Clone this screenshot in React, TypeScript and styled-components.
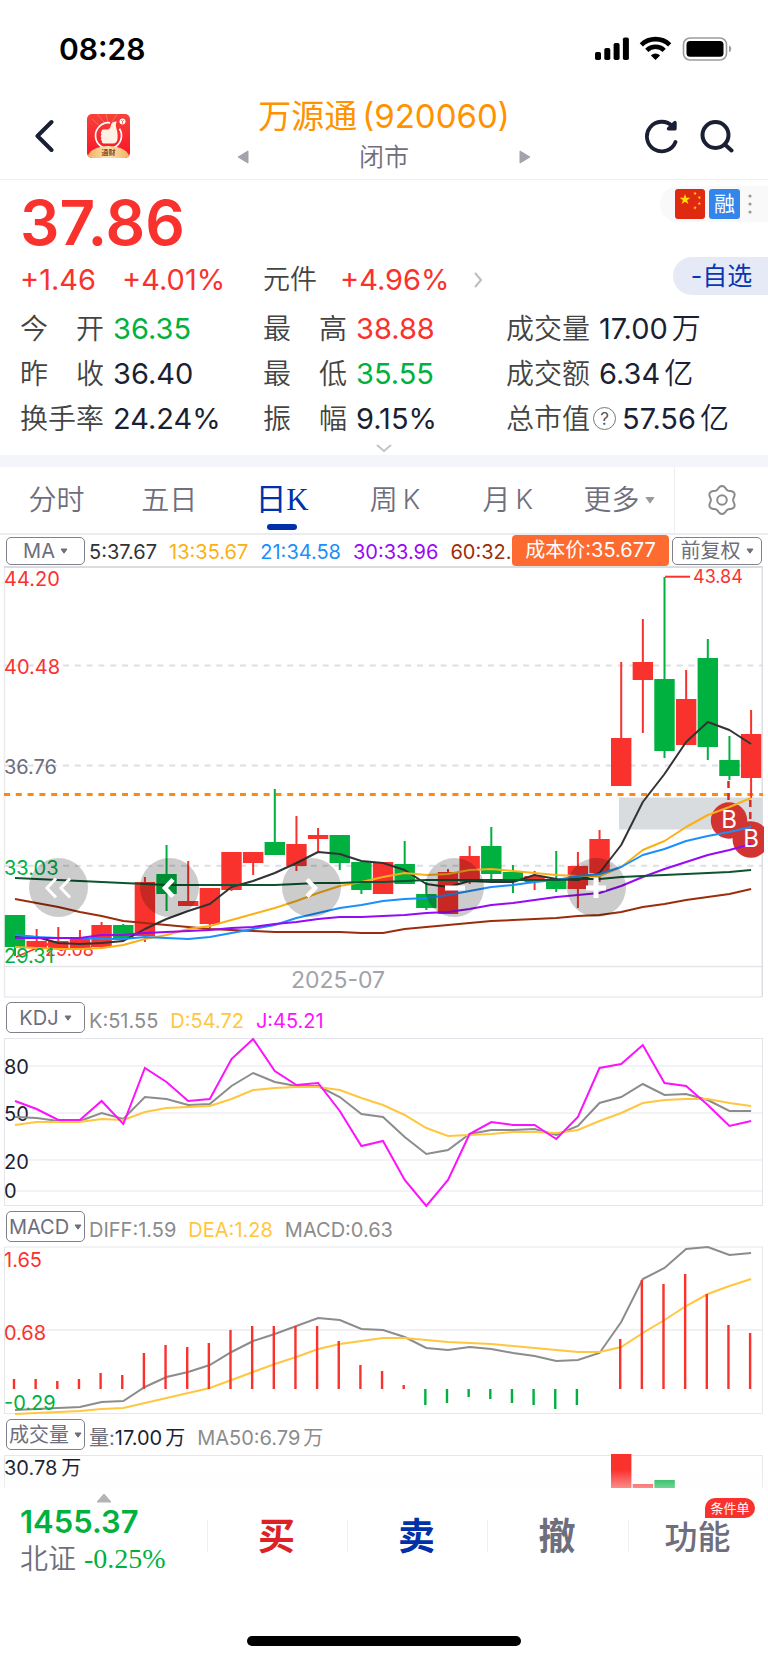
import React from "react";
import styled, { createGlobalStyle } from "styled-components";

const c = {
  red: "#fa322d",
  green: "#00b140",
  ink: "#1b1f33",
  label: "#444444",
  grey: "#6e6e7c",
  navy: "#0031a8",
  frame: "#e3e5e8",
};
const sans = `Inter, "Noto Sans CJK SC", sans-serif`;
const serif = `"Liberation Serif", "Noto Sans CJK SC", serif`;

const GlobalStyle = createGlobalStyle`
  * { box-sizing: border-box; }
  body { margin: 0; background: #fff; font-family: ${sans}; color: ${c.ink}; }
  button { font: inherit; color: inherit; background: none; border: 0; padding: 0; cursor: pointer; }
  svg { display: block; }
`;

const Page = styled.div`
  width: 100%;
  overflow: hidden;
`;

/* ---------- status bar and header ---------- */

const StatusBar = styled.div`
  display: flex;
  align-items: center;
  justify-content: space-between;
  height: 98px;
  padding: 0 36px 0 59px;
`;
const Clock = styled.time`
  font-size: 30px;
  font-weight: 600;
  color: #000;
`;
const Header = styled.header`
  display: grid;
  grid-template-columns: 1fr 294px 1fr;
  align-items: center;
  height: 82px;
  padding: 0 34px 6px;
  border-bottom: 1px solid #eeeeef;
`;
const HeaderSide = styled.div<{ $end?: boolean; $gap: number }>`
  display: flex;
  align-items: center;
  justify-content: ${(p) => (p.$end ? "flex-end" : "flex-start")};
  gap: ${(p) => p.$gap}px;
`;
const TitleBlock = styled.div`
  display: flex;
  flex-direction: column;
  align-items: center;
  gap: 6px;
`;
const Title = styled.h1`
  display: flex;
  gap: 5px;
  margin: 0;
  font-size: 33px;
  line-height: 36px;
  font-weight: 400;
  color: #ff9200;
  white-space: nowrap;
`;
const MarketRow = styled.div`
  display: flex;
  align-items: center;
  justify-content: space-between;
  width: 100%;
  font-size: 25px;
  line-height: 34px;
  color: ${c.grey};
`;
const MarketState = styled.span`
  font-weight: 350;
`;

/* ---------- quote ---------- */

const Quote = styled.section`
  display: flex;
  flex-direction: column;
`;
const PriceRow = styled.div`
  display: flex;
  align-items: flex-start;
  justify-content: space-between;
  height: 77px;
  padding-left: 20px;
`;
const Price = styled.strong`
  margin-top: 13px;
  font-size: 62px;
  line-height: 60px;
  font-weight: 600;
  color: ${c.red};
`;
const Tags = styled.div`
  display: flex;
  align-items: center;
  gap: 4px;
  height: 36px;
  margin-top: 6px;
  padding: 0 16px 0 15px;
  border-radius: 18px 0 0 18px;
  background: #f9f9fa;
`;
const MarginTag = styled.span`
  width: 31px;
  height: 30px;
  margin-right: 4px;
  border-radius: 3px;
  background: #3385ea;
  color: #fff;
  font-size: 21px;
  line-height: 29px;
  text-align: center;
`;
const Columns = styled.div`
  display: grid;
  grid-template-columns: repeat(3, 1fr);
  padding: 0 19px 0 20px;
`;
const ChangeRow = styled(Columns)`
  height: 40px;
  padding-right: 0;
  grid-template-columns: 243fr 243fr 262fr;
  align-items: end;
`;
const Change = styled.div<{ $gap: number }>`
  display: flex;
  align-items: center;
  gap: ${(p) => p.$gap}px;
  font-size: 29px;
  line-height: 34px;
  color: ${c.red};
  white-space: nowrap;
`;
const Sector = styled.a`
  color: ${c.label};
  text-decoration: none;
  font-size: 27px;
  font-weight: 350;
`;
const WatchButton = styled.button`
  align-self: start;
  justify-self: end;
  width: 95px;
  height: 38px;
  padding-left: 2px;
  border-radius: 19px 0 0 19px;
  background: #e5eaf6;
  color: #0936b3;
  font-size: 25px;
  line-height: 38px;
`;
const Stats = styled(Columns)`
  padding-top: 9px;
`;
const Stat = styled.div`
  display: flex;
  align-items: center;
  gap: 9px;
  height: 45px;
  font-size: 28px;
  line-height: 34px;
  white-space: nowrap;
`;
const StatLabel = styled.span`
  display: flex;
  justify-content: space-between;
  width: 84px;
  color: ${c.label};
  font-weight: 350;
`;
const StatValue = styled.span<{ $tone: string }>`
  display: flex;
  gap: 4px;
  font-size: 29px;
  color: ${(p) => p.$tone};
`;
const Unit = styled.span`
  font-weight: 350;
`;
const Help = styled.button`
  width: 23px;
  height: 23px;
  margin: 0 -3px 0 -6px;
  border: 1px solid #777;
  border-radius: 50%;
  color: #555;
  font-size: 17px;
  line-height: 20px;
`;
const ExpandButton = styled.button`
  align-self: center;
  height: 14px;
`;
const Band = styled.div`
  height: 12px;
  background: #f4f5fb;
`;

/* ---------- tabs ---------- */

const Tabs = styled.nav`
  display: grid;
  grid-template-columns: 675fr 93fr;
  height: 68px;
  border-bottom: 2px solid #eaecee;
`;
const TabList = styled.div`
  display: grid;
  grid-template-columns: repeat(5, 113fr) 110fr;
  border-right: 1px solid #eeeeef;
`;
const Tab = styled.button<{ $active?: boolean }>`
  display: flex;
  align-items: center;
  justify-content: center;
  gap: 5px;
  position: relative;
  color: ${(p) => (p.$active ? c.navy : c.grey)};
  font-family: ${(p) => (p.$active ? serif : sans)};
  font-size: ${(p) => (p.$active ? 31 : 28)}px;
  font-weight: ${(p) => (p.$active ? 400 : 350)};
  line-height: 34px;
  &::after {
    content: "";
    display: ${(p) => (p.$active ? "block" : "none")};
    position: absolute;
    bottom: 3px;
    left: calc(50% - 15px);
    width: 30px;
    height: 6px;
    border-radius: 3px;
    background: ${c.navy};
  }
`;
const Latin = styled.span`
  font-size: 27px;
`;
const SettingsButton = styled.button`
  display: flex;
  align-items: center;
  justify-content: center;
`;

/* ---------- indicator bars ---------- */

const IndicatorBar = styled.div<{ $tall?: boolean }>`
  display: flex;
  align-items: center;
  gap: 4px;
  height: ${(p) => (p.$tall ? 39 : 31)}px;
  padding: 0 6px;
`;
const Picker = styled.label<{ $tall?: boolean; $wide?: boolean }>`
  display: flex;
  align-items: center;
  justify-content: center;
  gap: 5px;
  flex: none;
  width: ${(p) => (p.$wide ? 90 : 79)}px;
  height: ${(p) => (p.$tall ? 31 : 28)}px;
  border: 1px solid #81818d;
  border-radius: 5px;
`;
const Select = styled.select`
  appearance: none;
  field-sizing: content;
  border: 0;
  padding: 0;
  background: none;
  color: ${c.grey};
  font-family: ${sans};
  font-size: 20px;
  line-height: 24px;
`;
const Readings = styled.div<{ $low?: boolean }>`
  display: flex;
  flex: 1;
  gap: 12px;
  min-width: 0;
  overflow: hidden;
  padding-top: ${(p) => (p.$low ? 6 : 2)}px;
  font-size: 20px;
  line-height: 24px;
  white-space: nowrap;
`;
const Reading = styled.span<{ $tone: string }>`
  display: flex;
  flex: none;
  color: ${(p) => p.$tone};
`;
const ReadingName = styled.span`
  color: ${c.grey};
`;
const ReadingUnit = styled.span`
  padding-left: 3px;
`;
const CostTag = styled.span`
  flex: none;
  width: 157px;
  height: 31px;
  margin: 0 -1px 0 -4px;
  border-radius: 4px;
  background: #fd6b30;
  color: #fff;
  font-size: 20px;
  line-height: 31px;
  text-align: center;
`;

/* ---------- charts ---------- */

const ChartArea = styled.div`
  position: relative;
`;
const Chart = styled.svg`
  width: 100%;
  height: auto;
  font-family: ${sans};
  font-size: 20px;
`;
const ChartButton = styled.button<{ $left: number }>`
  position: absolute;
  top: 67.6%;
  left: ${(p) => p.$left}%;
  display: flex;
  align-items: center;
  justify-content: center;
  width: 59px;
  height: 59px;
  border-radius: 50%;
  background: rgba(0, 0, 0, 0.2);
`;

/* ---------- bottom bar ---------- */

const BottomBar = styled.footer`
  display: grid;
  grid-template-columns: 207fr 140fr 140fr 141fr 140fr;
  height: 148px;
  background: #fff;
`;
const IndexButton = styled.button`
  display: flex;
  flex-direction: column;
  align-items: flex-start;
  padding: 5px 0 0 20px;
  text-align: left;
  color: ${c.green};
  white-space: nowrap;
`;
const IndexMarker = styled.span`
  margin-left: 75px;
`;
const IndexValue = styled.strong`
  font-size: 31px;
  line-height: 38px;
  font-weight: 600;
`;
const IndexLine = styled.span`
  display: flex;
  gap: 8px;
  font-size: 28px;
  line-height: 36px;
  color: ${c.grey};
`;
const IndexName = styled.span`
  font-weight: 350;
`;
const IndexChange = styled.span`
  font-family: ${serif};
  color: ${c.green};
`;
const Action = styled.button<{ $tone: string; $small?: boolean }>`
  position: relative;
  height: 32px;
  margin-top: 32px;
  padding-right: 2px;
  border-left: 1px solid #eff0f6;
  color: ${(p) => p.$tone};
  font-size: ${(p) => (p.$small ? 33 : 37)}px;
  font-weight: ${(p) => (p.$small ? 500 : 700)};
  line-height: 34px;
`;
const Badge = styled.span`
  position: absolute;
  top: -22px;
  right: 13px;
  width: 50px;
  height: 20px;
  border-radius: 10px 10px 10px 0;
  background: ${c.red};
  color: #fff;
  font-size: 13px;
  font-weight: 400;
  line-height: 20px;
`;
const HomeIndicator = styled.div`
  width: 274px;
  height: 10px;
  margin: 0 auto 17px;
  border-radius: 5px;
  background: #000;
`;

/* ---------- icons ---------- */

const starPoints = (cx: number, cy: number, r: number, turn = 0) =>
  Array.from({ length: 10 }, (_, i) => {
    const a = ((i * 36 - 90 + turn) * Math.PI) / 180;
    const d = i % 2 ? r * 0.4 : r;
    return `${(cx + d * Math.cos(a)).toFixed(2)},${(cy + d * Math.sin(a)).toFixed(2)}`;
  }).join(" ");

const gearPoints = Array.from({ length: 72 }, (_, i) => {
  const a = (i * 5 * Math.PI) / 180;
  const r = 12.6 + 1.5 * Math.cos(6 * a);
  return `${(16 + r * Math.sin(a)).toFixed(2)},${(16 - r * Math.cos(a)).toFixed(2)}`;
}).join(" ");

const StatusIcons = () => (
  <svg width="138" height="26" viewBox="594 36 138 26" aria-hidden="true">
    <rect x="595" y="52" width="6" height="8" rx="1.8" />
    <rect x="604.3" y="48" width="6" height="12" rx="1.8" />
    <rect x="613.6" y="43" width="6" height="17" rx="1.8" />
    <rect x="622.9" y="37.5" width="6" height="22.5" rx="1.8" />
    <g fill="none" stroke="#000" strokeWidth="4.6">
      <path d="M641.3 44.8a20.5 20.5 0 0 1 28.4 0" />
      <path d="M646.8 50.3a12.6 12.6 0 0 1 17.4 0" />
    </g>
    <path d="M655.5 60l-4.6-4.6a6.6 6.6 0 0 1 9.2 0z" />
    <rect x="683.5" y="38" width="43" height="22" rx="6.5" fill="none" stroke="#9c9c9c" strokeWidth="1.6" />
    <rect x="686.5" y="41" width="37" height="15.8" rx="3.6" />
    <path d="M729 45.5c3 .8 3 6 0 6.8z" fill="#9c9c9c" />
  </svg>
);

const BackIcon = () => (
  <svg width="20" height="34" viewBox="0 0 20 34">
    <path d="M17.500 3L3.500 17l14 14" fill="none" stroke={c.ink} strokeWidth="4" strokeLinecap="round" strokeLinejoin="round" />
  </svg>
);

const AppLogo = () => (
  <svg width="43" height="44" viewBox="0 0 43 44">
    <defs>
      <linearGradient id="logoRed" x1="0" y1="0" x2="0" y2="1">
        <stop offset="0" stopColor="#f5443a" />
        <stop offset="1" stopColor="#fb1226" />
      </linearGradient>
      <linearGradient id="logoGold" x1="0" y1="0" x2="1" y2="0">
        <stop offset="0" stopColor="#f0b263" />
        <stop offset="0.5" stopColor="#fde0ae" />
        <stop offset="1" stopColor="#f0b263" />
      </linearGradient>
      <clipPath id="logoClip">
        <rect width="43" height="44" rx="5" />
      </clipPath>
    </defs>
    <g clipPath="url(#logoClip)">
      <rect width="43" height="44" fill="url(#logoRed)" />
      <path d="M10 0l8 9M5 5l9 8M19 0l2 8M30 0l-5 8" stroke="#ff8b75" strokeWidth="1" opacity="0.6" />
      <path d="M23 8.800a13 13 0 1 0 9.500 6" fill="none" stroke="#fff" strokeWidth="1.700" />
      <path
        d="M14.500 17.500c0-1.500 1-2 2.500-2h3.500c2.500-.4 3.200-2.500 3.500-4.500.3-2.300 2.400-3.400 5.800-3.400-1.400 2.600-.9 4.900-.3 7.400.9 2.500 1.500 6 1 10-.4 2.800-1.800 4.500-4.500 4.500H17c-1.800 0-2.600-1.200-1.900-2.500-1.300-.7-1.500-2.100-.5-3.100-1.100-.9-1.100-2.400 0-3.200-.8-1-.8-2.300-.1-3.200z"
        fill="#fff2e4"
      />
      <circle cx="35.500" cy="7.500" r="3" fill="#fff" />
      <path d="M34.200 6l1.300 1.500L36.800 6M35.500 7.500v2.200" stroke="#f33" strokeWidth="0.700" fill="none" />
      <ellipse cx="21.500" cy="44" rx="21" ry="12" fill="url(#logoGold)" />
      <text x="21.500" y="40.500" textAnchor="middle" fontSize="7" fontWeight="700" fill="#8a4a14">
        通财
      </text>
    </g>
  </svg>
);

const Triangle = ({ flip }: { flip?: boolean }) => (
  <svg width="12" height="14" viewBox="0 0 12 14">
    <path d={flip ? "M1 1l10 6-10 6z" : "M11 1L1 7l10 6z"} fill="#a3a3ad" stroke="#a3a3ad" strokeLinejoin="round" />
  </svg>
);

const RefreshIcon = () => (
  <svg width="36" height="36" viewBox="0 0 36 36">
    <path d="M31.500 24A14.800 14.800 0 1 1 28.500 8.400" fill="none" stroke={c.ink} strokeWidth="3.800" strokeLinecap="round" />
    <path d="M31 4.600v6.200h-6.500z" fill={c.ink} stroke={c.ink} strokeWidth="3.400" strokeLinejoin="round" />
  </svg>
);

const SearchIcon = () => (
  <svg width="34" height="34" viewBox="0 0 34 34">
    <circle cx="15.500" cy="16" r="13" fill="none" stroke={c.ink} strokeWidth="4" />
    <path d="M26 26.500l5.500 5" stroke={c.ink} strokeWidth="4" strokeLinecap="round" />
  </svg>
);

const FlagIcon = () => (
  <svg width="30" height="30" viewBox="0 0 30 30">
    <rect width="30" height="30" rx="3" fill="#df2910" />
    <g fill="#ffde00">
      <polygon points={starPoints(10, 10.500, 5.600)} />
      <polygon points={starPoints(20, 4.500, 1.900, 20)} />
      <polygon points={starPoints(24.300, 8.500, 1.900, 40)} />
      <polygon points={starPoints(24.300, 14.500, 1.900)} />
      <polygon points={starPoints(20, 18.800, 1.900, 20)} />
    </g>
  </svg>
);

const DotsIcon = () => (
  <svg width="4" height="22" viewBox="0 0 4 22">
    <g fill="#9b9b9b">
      <circle cx="2" cy="3" r="1.600" />
      <circle cx="2" cy="11" r="1.600" />
      <circle cx="2" cy="19" r="1.600" />
    </g>
  </svg>
);

const Caret = ({ size = 8, tone = c.grey }: { size?: number; tone?: string }) => (
  <svg width={size} height={size} viewBox="0 0 8 8">
    <path d="M1 2h6L4 6.200z" fill={tone} stroke={tone} strokeLinejoin="round" />
  </svg>
);

const GearIcon = () => (
  <svg width="32" height="32" viewBox="0 0 32 32" fill="none" stroke="#8b8b8b" strokeWidth="2">
    <polygon points={gearPoints} />
    <circle cx="16" cy="16" r="4.800" />
  </svg>
);

/* ---------- data ---------- */

const stepX = (i: number) => 15 + 21.65 * i;
const line = (ys: number[]) => ys.map((y, i) => `${stepX(i).toFixed(1)},${y}`).join(" ");

// direction, body top, body bottom, high, low
type Candle = ["r" | "g", number, number, number, number];
const candles: Candle[] = [
  ["g", 915, 947, 915, 956], ["r", 941, 948, 929, 948], ["r", 941, 948, 927, 948], ["r", 939, 949, 930, 949],
  ["r", 925, 947, 922, 949], ["g", 925, 939, 924, 939], ["r", 882, 936, 877, 942], ["g", 874, 894, 845, 911],
  ["r", 901, 906, 861, 906], ["r", 888, 924, 888, 928], ["r", 852, 890, 852, 891], ["r", 852, 863, 852, 875],
  ["g", 842, 855, 789, 855], ["r", 844, 866, 816, 871], ["r", 835, 839, 828, 852], ["g", 835, 863, 835, 870],
  ["g", 862, 890, 862, 894], ["r", 862, 894, 862, 894], ["g", 864, 884, 841, 884], ["g", 894, 908, 882, 910],
  ["r", 872, 914, 869, 914], ["r", 856, 882, 846, 884], ["g", 846, 874, 827, 879], ["g", 872, 880, 865, 893],
  ["r", 876, 882, 871, 890], ["g", 879, 889, 851, 892], ["r", 866, 889, 852, 908], ["r", 839, 873, 830, 882],
  ["r", 738, 786, 662, 786], ["r", 662, 680, 619, 733], ["g", 679, 751, 577, 758], ["r", 699, 745, 670, 745],
  ["g", 658, 747, 639, 760], ["g", 760, 776, 736, 780], ["r", 734, 778, 710, 798],
];

const averages: [string, number[]][] = [
  ["#9c2d0c", [899, 903, 907, 912, 916, 921, 923, 925, 927, 929, 930, 931, 932, 932, 932, 932, 933, 933, 929, 927, 925, 923, 921, 920, 919, 918, 916, 915, 912, 907, 904, 900, 897, 894, 889]],
  ["#333333", [936, 937, 943, 944, 943, 941, 929, 919, 911, 904, 887, 881, 873, 863, 852, 854, 861, 863, 870, 884, 887, 881, 882, 882, 875, 879, 880, 873, 845, 802, 774, 742, 722, 730, 744]],
  ["#fbb016", [947, 948, 949, 949, 948, 945, 939, 935, 929, 926, 920, 914, 908, 901, 893, 886, 882, 877, 873, 875, 874, 870, 869, 871, 873, 875, 876, 876, 867, 850, 841, 827, 815, 807, 798]],
  ["#1b8ffb", [935, 937, 938, 938, 939, 939, 937, 938, 939, 937, 933, 929, 925, 918, 913, 908, 905, 901, 899, 898, 895, 891, 887, 885, 882, 880, 876, 874, 867, 855, 849, 841, 836, 832, 827]],
  ["#960af5", [938, 938, 938, 938, 935, 935, 933, 932, 931, 930, 928, 927, 924, 922, 919, 917, 917, 916, 915, 913, 912, 909, 905, 903, 900, 897, 895, 893, 886, 877, 869, 862, 855, 850, 844]],
  ["#0d5430", [878, 879, 880, 881, 882, 883, 884, 885, 885, 885, 885, 885, 885, 884, 883, 883, 882, 882, 881, 880, 880, 880, 880, 880, 880, 880, 879, 879, 877, 876, 875, 874, 873, 872, 870]],
];

const kLine = [1117, 1118, 1121, 1121, 1113, 1119, 1097, 1099, 1105, 1104, 1086, 1073, 1082, 1086, 1086, 1097, 1114, 1117, 1137, 1154, 1150, 1134, 1130, 1130, 1129, 1135, 1126, 1103, 1097, 1084, 1095, 1094, 1100, 1111, 1111];
const dLine = [1125, 1122, 1122, 1122, 1119, 1120, 1112, 1108, 1107, 1106, 1099, 1090, 1088, 1087, 1087, 1090, 1098, 1105, 1115, 1128, 1136, 1135, 1134, 1132, 1132, 1133, 1130, 1121, 1113, 1103, 1100, 1099, 1099, 1103, 1106];
const jLine = [1101, 1109, 1120, 1120, 1101, 1124, 1068, 1082, 1101, 1099, 1059, 1039, 1071, 1085, 1083, 1111, 1146, 1141, 1180, 1206, 1180, 1134, 1122, 1125, 1125, 1139, 1117, 1068, 1064, 1045, 1083, 1086, 1105, 1126, 1121];

const diffLine = [1410, 1409, 1408, 1407, 1402, 1401, 1387, 1377, 1372, 1365, 1352, 1341, 1334, 1326, 1318, 1320, 1329, 1330, 1337, 1348, 1350, 1347, 1349, 1353, 1356, 1361, 1360, 1353, 1322, 1279, 1268, 1249, 1247, 1255, 1253];
const deaLine = [1414, 1413, 1412, 1411, 1409, 1408, 1403, 1398, 1393, 1388, 1380, 1372, 1364, 1357, 1349, 1344, 1341, 1338, 1338, 1340, 1342, 1343, 1344, 1346, 1348, 1350, 1352, 1352, 1347, 1333, 1320, 1306, 1294, 1286, 1279];
const macdBars = [1379, 1379, 1381, 1379, 1373, 1375, 1353, 1345, 1347, 1343, 1330, 1326, 1326, 1326, 1326, 1341, 1365, 1371, 1385, 1405, 1403, 1397, 1399, 1403, 1405, 1409, 1405, 1389, 1339, 1280, 1284, 1274, 1294, 1325, 1333];

// name, figure, unit, colour
const stats: [string, string, string, string][] = [
  ["今开", "36.35", "", c.green],
  ["最高", "38.88", "", c.red],
  ["成交量", "17.00", "万", c.ink],
  ["昨收", "36.40", "", c.ink],
  ["最低", "35.55", "", c.green],
  ["成交额", "6.34", "亿", c.ink],
  ["换手率", "24.24%", "", c.ink],
  ["振幅", "9.15%", "", c.ink],
  ["总市值", "57.56", "亿", c.ink],
];

/* ---------- parts ---------- */

interface PickerProps {
  name: string;
  options: string[];
  tall?: boolean;
  wide?: boolean;
}
const Dropdown = ({ name, options, tall, wide }: PickerProps) => (
  <Picker $tall={tall} $wide={wide}>
    <Select aria-label={name} defaultValue={options[0]}>
      {options.map((o) => (
        <option key={o}>{o}</option>
      ))}
    </Select>
    <Caret />
  </Picker>
);

const PriceChart = () => (
  <Chart viewBox="0 566 768 432" role="img" aria-label="日K线图">
    <g fill="none" stroke={c.frame} strokeWidth="1.500">
      <path d="M4.500 566V997H762" stroke="#ececef" />
      <path d="M4 966.500H762" />
      <path d="M4 567H763" stroke="#d9dde0" strokeWidth="2" />
      <path d="M762.300 566V997" stroke="#dcdee6" />
    </g>
    <path d="M4 665.500H762M4 765.500H762M4 865.700H762" stroke="#dcdfe3" strokeWidth="2" strokeDasharray="6 5.800" />
    <path d="M4 794.500H763" stroke="#ff8a0a" strokeWidth="3" strokeDasharray="6 5.800" />
    <text x="45" y="956" fontSize="18" fill={c.red}>29.08</text>
    <path d="M16 957L37 948" stroke={c.red} strokeWidth="1.500" />
    <rect x="619" y="797.500" width="143" height="32" fill="#d8dcdf" />
    {candles.map(([dir, top, bottom, high, low], i) => {
      const x = stepX(i);
      const tone = dir === "r" ? c.red : c.green;
      return (
        <g key={i} fill={tone}>
          <rect x={x - 1} y={high} width="2" height={low - high} />
          <rect x={x - 10.200} y={top} width="20.400" height={bottom - top} />
        </g>
      );
    })}
    <path d="M665 576.700H690" stroke={c.red} strokeWidth="2" />
    <text x="693" y="583" fontSize="18" fill={c.red}>43.84</text>
    <path d="M728.500 781V802M750.300 800V822" stroke="#d52b2b" strokeWidth="2.500" strokeDasharray="7 5" />
    <g fill="#d23431">
      <circle cx="729" cy="820.500" r="18.200" />
      <path d="M764 827A18.200 18.200 0 1 0 764 852z" />
    </g>
    <g fill="none" strokeWidth="2" strokeLinejoin="round">
      {averages.map(([tone, ys]) => (
        <polyline key={tone} points={line(ys)} stroke={tone} />
      ))}
    </g>
    <g fill="#fff" fontSize="24" textAnchor="middle">
      <text x="729" y="828">B</text>
      <text x="751" y="847">B</text>
    </g>
    <text x="4" y="586" fill={c.red}>44.20</text>
    <text x="4" y="674" fill={c.red}>40.48</text>
    <text x="4" y="774" fill={c.grey}>36.76</text>
    <text x="4" y="875" fill={c.green}>33.03</text>
    <text x="4" y="963" fill={c.green}>29.31</text>
    <text x="338" y="988" fontSize="23" fill="#a2a2aa" textAnchor="middle">2025-07</text>
  </Chart>
);

// name, left edge in percent, glyph path, stroke width
const chartButtons: [string, number, string, number][] = [
  ["最早", 3.84, "M19 1.500L10 11l9 9.500M33 1.500L24 11l9 9.500", 3],
  ["向左", 18.2, "M26 2.500L18 11l8 8.500", 4.5],
  ["向右", 36.7, "M18 2.500L26 11l-8 8.500", 4.5],
  ["缩小", 55.4, "M12 11H32", 5],
  ["放大", 73.8, "M12 11H32M22 1V21", 5],
];

const KdjChart = () => (
  <Chart viewBox="0 1037 768 170" role="img" aria-label="KDJ">
    <rect x="4.500" y="1038.500" width="758" height="167" fill="none" stroke="#e4e5eb" />
    <path d="M4 1066H762M4 1113H762M4 1160H762M4 1191H762" stroke="#f0f0f5" strokeWidth="1.500" />
    <g fill={c.ink}>
      <text x="4" y="1074">80</text>
      <text x="4" y="1121">50</text>
      <text x="4" y="1169">20</text>
      <text x="4" y="1198">0</text>
    </g>
    <g fill="none" strokeWidth="2">
      <polyline points={line(kLine)} stroke="#8c8c8c" />
      <polyline points={line(dLine)} stroke="#ffc640" />
      <polyline points={line(jLine)} stroke="#fc12fc" />
    </g>
  </Chart>
);

const MacdChart = () => (
  <Chart viewBox="0 1246 768 169" role="img" aria-label="MACD">
    <rect x="4.500" y="1247" width="758" height="166.500" fill="none" stroke="#e6e7ea" />
    <path d="M4 1330H762" stroke="#ededf0" strokeWidth="1.500" />
    <g fill="none" strokeWidth="2">
      <polyline points={line(diffLine)} stroke="#8c8c8c" />
      <polyline points={line(deaLine)} stroke="#ffc640" />
    </g>
    {macdBars.map((y, i) => (
      <rect
        key={i}
        x={stepX(i) - 2.200}
        y={Math.min(y, 1389)}
        width="2.400"
        height={Math.abs(1389 - y)}
        fill={y > 1389 ? c.green : c.red}
      />
    ))}
    <text x="4" y="1267" fill={c.red}>1.65</text>
    <text x="4" y="1340" fill={c.red}>0.68</text>
    <text x="4" y="1410" fill={c.green}>-0.29</text>
  </Chart>
);

const VolumeChart = () => (
  <Chart viewBox="0 1454 768 34" role="img" aria-label="成交量">
    <defs>
      <linearGradient id="fade" x1="0" y1="0" x2="0" y2="1">
        <stop offset="0" stopColor="#fbfbfd" stopOpacity="0" />
        <stop offset="1" stopColor="#fbfbfd" stopOpacity="0.450" />
      </linearGradient>
    </defs>
    <path d="M4.500 1488V1455.500H762.500V1488" fill="none" stroke="#e6e7ea" />
    <rect x="611" y="1454" width="20.400" height="34" fill={c.red} />
    <rect x="632.700" y="1484" width="20.400" height="4" fill={c.red} />
    <rect x="654.400" y="1480" width="20.400" height="8" fill={c.green} />
    <text x="4" y="1475" fill={c.ink}>30.78<tspan dx="4">万</tspan></text>
    <rect x="0" y="1470" width="768" height="18" fill="url(#fade)" />
  </Chart>
);

export default function App() {
  return (
    <Page>
      <GlobalStyle />
      <StatusBar>
        <Clock>08:28</Clock>
        <StatusIcons />
      </StatusBar>
      <Header>
        <HeaderSide $gap={33}>
          <button aria-label="返回"><BackIcon /></button>
          <button aria-label="通财"><AppLogo /></button>
        </HeaderSide>
        <TitleBlock>
          <Title>
            <span>万源通</span>
            <span>(920060)</span>
          </Title>
          <MarketRow>
            <button aria-label="上一只"><Triangle /></button>
            <MarketState>闭市</MarketState>
            <button aria-label="下一只"><Triangle flip /></button>
          </MarketRow>
        </TitleBlock>
        <HeaderSide $end $gap={20}>
          <button aria-label="刷新"><RefreshIcon /></button>
          <button aria-label="搜索"><SearchIcon /></button>
        </HeaderSide>
      </Header>

      <Quote>
        <PriceRow>
          <Price>37.86</Price>
          <Tags>
            <FlagIcon />
            <MarginTag>融</MarginTag>
            <DotsIcon />
          </Tags>
        </PriceRow>
        <ChangeRow>
          <Change $gap={26}>
            <span>+1.46</span>
            <span>+4.01%</span>
          </Change>
          <Change $gap={23}>
            <Sector href="#sector">元件</Sector>
            <span>+4.96%</span>
            <svg width="10" height="18" viewBox="0 0 10 18">
              <path d="M2 2l6 7-6 7" fill="none" stroke="#bdbdbd" strokeWidth="2" />
            </svg>
          </Change>
          <WatchButton>-自选</WatchButton>
        </ChangeRow>
        <Stats>
          {stats.map(([name, value, unit, tone]) => (
            <Stat key={name}>
              <StatLabel>
                {name.split("").map((ch) => (
                  <span key={ch}>{ch}</span>
                ))}
              </StatLabel>
              {name === "总市值" && <Help aria-label="总市值说明">?</Help>}
              <StatValue $tone={tone}>
                {value}
                {unit && <Unit>{unit}</Unit>}
              </StatValue>
            </Stat>
          ))}
        </Stats>
        <ExpandButton aria-label="展开">
          <svg width="16" height="9" viewBox="0 0 16 9">
            <path d="M1 1l7 6 7-6" fill="none" stroke="#c4c4c4" strokeWidth="2" />
          </svg>
        </ExpandButton>
      </Quote>
      <Band />

      <Tabs>
        <TabList>
          <Tab>分时</Tab>
          <Tab>五日</Tab>
          <Tab $active>日K</Tab>
          <Tab>周<Latin>K</Latin></Tab>
          <Tab>月<Latin>K</Latin></Tab>
          <Tab>更多<Caret size={10} tone="#9a9a9a" /></Tab>
        </TabList>
        <SettingsButton aria-label="设置"><GearIcon /></SettingsButton>
      </Tabs>

      <IndicatorBar>
        <Dropdown name="主图指标" options={["MA", "BOLL"]} />
        <Readings>
          <Reading $tone="#333">5:37.67</Reading>
          <Reading $tone="#fbb016">13:35.67</Reading>
          <Reading $tone="#1b8ffb">21:34.58</Reading>
          <Reading $tone="#960af5">30:33.96</Reading>
          <Reading $tone="#9c2d0c">60:32.</Reading>
        </Readings>
        <CostTag>成本价:35.677</CostTag>
        <Dropdown name="复权方式" options={["前复权", "后复权", "不复权"]} wide />
      </IndicatorBar>
      <ChartArea>
        <PriceChart />
        {chartButtons.map(([name, left, d, weight]) => (
          <ChartButton key={name} $left={left} aria-label={name}>
            <svg width="44" height="22" viewBox="0 0 44 22">
              <path d={d} fill="none" stroke="#fff" strokeWidth={weight} />
            </svg>
          </ChartButton>
        ))}
      </ChartArea>

      <IndicatorBar $tall>
        <Dropdown name="副图指标一" options={["KDJ", "RSI"]} tall />
        <Readings $low>
          <Reading $tone="#8c8c8c">K:51.55</Reading>
          <Reading $tone="#ffc640">D:54.72</Reading>
          <Reading $tone="#fc12fc">J:45.21</Reading>
        </Readings>
      </IndicatorBar>
      <KdjChart />

      <IndicatorBar $tall>
        <Dropdown name="副图指标二" options={["MACD", "DMI"]} tall />
        <Readings $low>
          <Reading $tone="#8c8c8c">DIFF:1.59</Reading>
          <Reading $tone="#ffc640">DEA:1.28</Reading>
          <Reading $tone="#8c8c8c">MACD:0.63</Reading>
        </Readings>
      </IndicatorBar>
      <MacdChart />

      <IndicatorBar $tall>
        <Dropdown name="副图指标三" options={["成交量", "成交额"]} tall />
        <Readings $low>
          <Reading $tone={c.ink}>
            <ReadingName>量:</ReadingName>17.00<ReadingUnit>万</ReadingUnit>
          </Reading>
          <Reading $tone="#8c8c8c">
            MA50:6.79<ReadingUnit>万</ReadingUnit>
          </Reading>
        </Readings>
      </IndicatorBar>
      <VolumeChart />

      <BottomBar>
        <IndexButton>
          <IndexMarker>
            <svg width="18" height="10" viewBox="0 0 18 10">
              <path d="M9 1l7 8H2z" fill="#b3b3b3" stroke="#b3b3b3" strokeLinejoin="round" />
            </svg>
          </IndexMarker>
          <IndexValue>1455.37</IndexValue>
          <IndexLine>
            <IndexName>北证</IndexName>
            <IndexChange>-0.25%</IndexChange>
          </IndexLine>
        </IndexButton>
        <Action $tone="#dc2127">买</Action>
        <Action $tone={c.navy}>卖</Action>
        <Action $tone={c.grey}>撤</Action>
        <Action $tone={c.grey} $small>
          功能
          <Badge>条件单</Badge>
        </Action>
      </BottomBar>
      <HomeIndicator />
    </Page>
  );
}
